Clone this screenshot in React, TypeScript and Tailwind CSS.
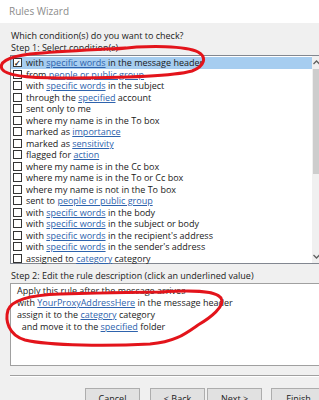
import React from 'react'

type Part = string | { link: string }

const conditions: Part[][] = [
	['with ', { link: 'specific words' }, ' in the message header'],
	['from ', { link: 'people or public group' }],
	['with ', { link: 'specific words' }, ' in the subject'],
	['through the ', { link: 'specified' }, ' account'],
	['sent only to me'],
	['where my name is in the To box'],
	['marked as ', { link: 'importance' }],
	['marked as ', { link: 'sensitivity' }],
	['flagged for ', { link: 'action' }],
	['where my name is in the Cc box'],
	['where my name is in the To or Cc box'],
	['where my name is not in the To box'],
	['sent to ', { link: 'people or public group' }],
	['with ', { link: 'specific words' }, ' in the body'],
	['with ', { link: 'specific words' }, ' in the subject or body'],
	['with ', { link: 'specific words' }, " in the recipient's address"],
	['with ', { link: 'specific words' }, " in the sender's address"],
	['assigned to ', { link: 'category' }, ' category'],
]

const description: Part[][] = [
	['Apply this rule after the message arrives'],
	['with ', { link: 'YourProxyAddressHere' }, ' in the message header'],
	['assign it to the ', { link: 'category' }, ' category'],
	['\u00a0 and move it to the ', { link: 'specified' }, ' folder'],
]

function Line({ parts }: { parts: Part[] }) {
	return (
		<>
			{parts.map((p, i) =>
				typeof p === 'string' ? (
					<span key={i}>{p}</span>
				) : (
					<span key={i} className="text-[#2e63ad] underline underline-offset-1 decoration-[#2e63ad]">
						{p.link}
					</span>
				)
			)}
		</>
	)
}

function Button({ label }: { label: string }) {
	return (
		<div className="w-[55px] h-[22px] shrink-0 bg-[#e1e1e1] border border-[#adadad] flex items-center justify-center text-[9px] text-[#1a1a1a]">
			{label}
		</div>
	)
}

export default function App() {
	return (
		<div
			className="relative w-[319px] h-[400px] overflow-hidden bg-[#f0f0f0] text-[#1a1a1a] flex flex-col"
			style={{ fontFamily: '"Open Sans", "Noto Sans", sans-serif' }}
		>
			{/* Title bar */}
			<div className="h-[23px] shrink-0 bg-white pl-[9px] flex items-center text-[10px] text-[#8c8c8c]">
				Rules Wizard
			</div>

			<div className="pl-[10px] pt-[7px] flex flex-col text-[9px]">
				<p className="h-[12px] leading-[12px] pl-px">Which condition(s) do you want to check?</p>
				<p className="h-[12px] leading-[12px] pl-px">Step 1: Select condition(s)</p>

				{/* Conditions list */}
				<div className="mt-px w-[320px] h-[209px] bg-white border border-[#828790] flex">
					<div className="flex-1 pt-px">
						{conditions.map((parts, i) => (
							<div
								key={i}
								className={`h-[11.5px] flex items-center gap-[4px] pl-[2px] whitespace-nowrap ${
									i === 0 ? 'bg-[#a6cdf0]' : ''
								}`}
							>
								<span className="w-[9px] h-[9px] shrink-0 bg-white border border-[#333] flex items-center justify-center text-[8px] leading-none font-bold">
									{i === 0 ? '✓' : ''}
								</span>
								<span className="leading-[11px]">
									<Line parts={parts} />
								</span>
							</div>
						))}
					</div>
					{/* Scrollbar */}
					<div className="w-[17px] shrink-0 bg-[#f0f0f0] flex flex-col items-start">
						<div className="h-[13px] w-[8px] flex items-center justify-center">
							<svg width="7" height="5" viewBox="0 0 7 5">
								<path d="M0.5 4 L3.5 1 L6.5 4" fill="none" stroke="#606060" strokeWidth="1.3" />
							</svg>
						</div>
						<div className="ml-px w-[15px] h-[105px] bg-[#cdcdcd]" />
						<div className="flex-1" />
						<div className="h-[13px] w-[8px] flex items-center justify-center">
							<svg width="7" height="5" viewBox="0 0 7 5">
								<path d="M0.5 1 L3.5 4 L6.5 1" fill="none" stroke="#606060" strokeWidth="1.3" />
							</svg>
						</div>
					</div>
				</div>

				<p className="mt-[6px] h-[12px] leading-[12px] pl-px whitespace-nowrap">
					Step 2: Edit the rule description (click an underlined value)
				</p>

				{/* Description box */}
				<div className="mt-px w-[320px] h-[83px] bg-white border border-[#a0a0a0] pt-px pl-[6px]">
					{description.map((parts, i) => (
						<p key={i} className="h-[12px] leading-[12px] whitespace-nowrap">
							<Line parts={parts} />
						</p>
					))}
				</div>

				<div className="mt-[9px] h-px bg-[#a0a0a0]" />
				<div className="h-px bg-white" />

				<div className="mt-[11px] flex pl-[75px]">
					<Button label="Cancel" />
					<div className="ml-[10px]">
						<Button label="< Back" />
					</div>
					<div className="ml-[2px]">
						<Button label="Next >" />
					</div>
					<div className="ml-[9px]">
						<Button label="Finish" />
					</div>
				</div>
			</div>

			{/* Red annotation marks */}
			<svg className="absolute inset-0 pointer-events-none" width="319" height="400" viewBox="0 0 319 400">
				<path
					d="M117 49 C150 45, 186 46, 198 52 C207 57, 205 66, 192 71 C170 77, 120 78, 60 78 C30 78, 6 76, 2 69 C-1 63, 6 57, 30 54 C60 51, 90 50, 125 48"
					fill="none"
					stroke="#e3141b"
					strokeWidth="3"
					strokeLinecap="round"
				/>
				<path
					d="M160 292 C190 290, 215 290, 221 298 C226 306, 210 318, 198 325 C185 334, 175 342, 150 344 C110 346, 50 346, 25 340 C8 335, 5 320, 8 310 C12 300, 30 295, 60 294 C100 293, 140 292, 165 292"
					fill="none"
					stroke="#e3141b"
					strokeWidth="3"
					strokeLinecap="round"
				/>
			</svg>
		</div>
	)
}
